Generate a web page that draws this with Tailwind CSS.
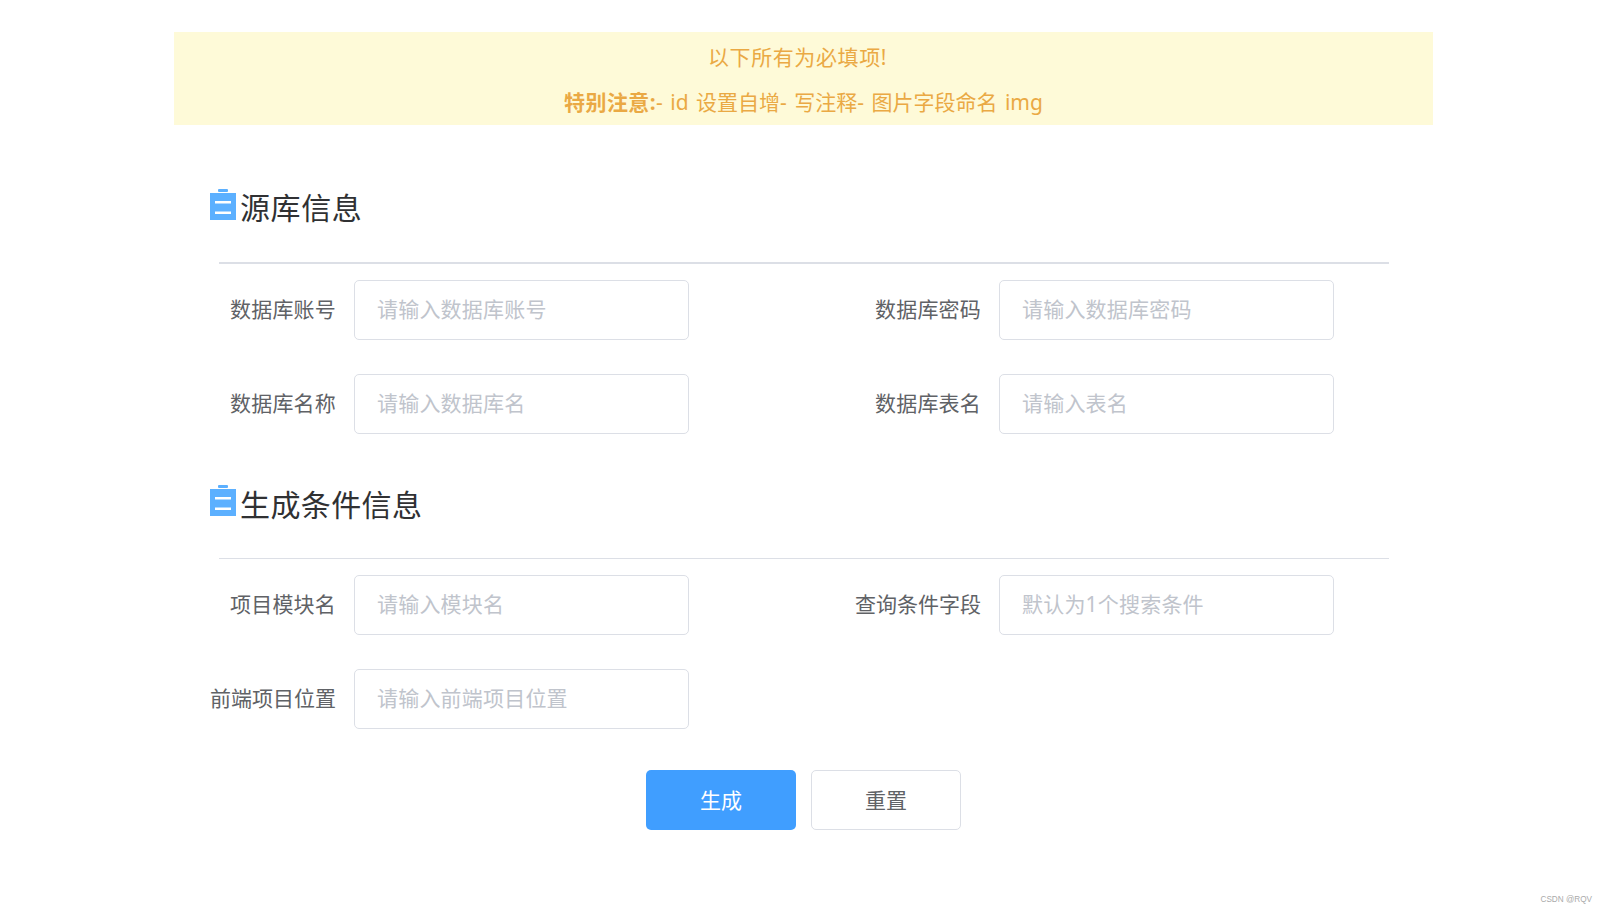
<!DOCTYPE html>
<html lang="zh-CN">

<head>
    <meta charset="UTF-8">
    <meta name="viewport" content="width=device-width, initial-scale=1.0">
    <script src="https://cdn.jsdelivr.net/npm/@tailwindcss/browser@4"></script>
    <title>代码生成</title>
</head>

<body>
    <div class="relative h-[914px] overflow-hidden bg-white pt-[32px] font-['Noto_Sans','Noto_Sans_CJK_SC',sans-serif]">
        <div class="ml-[174px] flex h-[93px] w-[1259px] flex-col items-center bg-[#fefad8] pt-[9px] text-[21px] leading-[32px] text-[#eaa944]">
            <p class="-ml-[12px] tracking-[0.6px]">以下所有为必填项!</p>
            <p class="mt-[13px] [word-spacing:2px]"><b class="font-bold tracking-[0.4px]">特别注意:</b>- id 设置自增- 写注释- 图片字段命名 img</p>
        </div>

        <form class="ml-[210px]">
            <div class="mt-[64px] flex h-[73px] items-start gap-[4px]">
                <svg class="h-[31px] w-[26px]" viewBox="0 0 26 31">
                    <rect fill="#5cb0ff" x="0" y="4" width="26" height="27" />
                    <rect fill="#5cb0ff" x="8" y="0" width="10" height="3" rx="1" />
                    <rect fill="#fff" x="5" y="12" width="16" height="2.5" />
                    <rect fill="#fff" x="5" y="22.5" width="16" height="2.5" />
                </svg>
                <h2 class="text-[30px] leading-[38px] tracking-[0.6px] text-[#303133]">源库信息</h2>
            </div>
            <div class="ml-[9px] h-[2px] w-[1170px] bg-[#dcdfe6]"></div>
            <div class="mt-[16px] grid grid-cols-[645px_645px] gap-y-[34px]">
                <label class="flex items-center"><span class="w-[126px] text-right text-[21px] tracking-[0.2px] text-[#606266]">数据库账号</span><input class="ml-[18px] h-[60px] w-[335px] rounded-[5px] border border-[#dcdfe6] px-[22px] pb-[2px] text-[21px] tracking-[0.2px] outline-none placeholder:text-[#c0c4cc]" placeholder="请输入数据库账号"></label>
                <label class="flex items-center"><span class="w-[126px] text-right text-[21px] tracking-[0.2px] text-[#606266]">数据库密码</span><input class="ml-[18px] h-[60px] w-[335px] rounded-[5px] border border-[#dcdfe6] px-[22px] pb-[2px] text-[21px] tracking-[0.2px] outline-none placeholder:text-[#c0c4cc]" placeholder="请输入数据库密码"></label>
                <label class="flex items-center"><span class="w-[126px] text-right text-[21px] tracking-[0.2px] text-[#606266]">数据库名称</span><input class="ml-[18px] h-[60px] w-[335px] rounded-[5px] border border-[#dcdfe6] px-[22px] pb-[2px] text-[21px] tracking-[0.2px] outline-none placeholder:text-[#c0c4cc]" placeholder="请输入数据库名"></label>
                <label class="flex items-center"><span class="w-[126px] text-right text-[21px] tracking-[0.2px] text-[#606266]">数据库表名</span><input class="ml-[18px] h-[60px] w-[335px] rounded-[5px] border border-[#dcdfe6] px-[22px] pb-[2px] text-[21px] tracking-[0.2px] outline-none placeholder:text-[#c0c4cc]" placeholder="请输入表名"></label>
            </div>

            <div class="mt-[51px] flex h-[73px] items-start gap-[4px]">
                <svg class="h-[31px] w-[26px]" viewBox="0 0 26 31">
                    <rect fill="#5cb0ff" x="0" y="4" width="26" height="27" />
                    <rect fill="#5cb0ff" x="8" y="0" width="10" height="3" rx="1" />
                    <rect fill="#fff" x="5" y="12" width="16" height="2.5" />
                    <rect fill="#fff" x="5" y="22.5" width="16" height="2.5" />
                </svg>
                <h2 class="mt-[1px] text-[30px] leading-[38px] tracking-[0.4px] text-[#303133]">生成条件信息</h2>
            </div>
            <div class="ml-[9px] h-[1px] w-[1170px] bg-[#dcdfe6]"></div>
            <div class="mt-[16px] grid grid-cols-[645px_645px] gap-y-[34px]">
                <label class="flex items-center"><span class="w-[126px] text-right text-[21px] tracking-[0.2px] text-[#606266]">项目模块名</span><input class="ml-[18px] h-[60px] w-[335px] rounded-[5px] border border-[#dcdfe6] px-[22px] pb-[2px] text-[21px] tracking-[0.2px] outline-none placeholder:text-[#c0c4cc]" placeholder="请输入模块名"></label>
                <label class="flex items-center"><span class="w-[126px] whitespace-nowrap text-right text-[21px] text-[#606266]">查询条件字段</span><input class="ml-[18px] h-[60px] w-[335px] rounded-[5px] border border-[#dcdfe6] px-[22px] pb-[2px] text-[21px] tracking-[0.2px] outline-none placeholder:text-[#c0c4cc]" placeholder="默认为1个搜索条件"></label>
                <label class="flex items-center"><span class="w-[126px] whitespace-nowrap text-right text-[21px] text-[#606266]">前端项目位置</span><input class="ml-[18px] h-[60px] w-[335px] rounded-[5px] border border-[#dcdfe6] px-[22px] pb-[2px] text-[21px] tracking-[0.2px] outline-none placeholder:text-[#c0c4cc]" placeholder="请输入前端项目位置"></label>
            </div>

            <div class="mt-[41px] ml-[436px] flex gap-[15px]">
                <button type="button" class="h-[60px] w-[150px] rounded-[5px] bg-[#409eff] pt-[1px] text-[21px] text-white">生成</button>
                <button type="button" class="h-[60px] w-[150px] rounded-[5px] border border-[#dcdfe6] bg-white pt-[1px] text-[21px] text-[#606266]">重置</button>
            </div>
        </form>

        <span class="absolute right-[14px] bottom-[8px] font-['Liberation_Sans',sans-serif] text-[8.2px] leading-[12px] text-[#aaaaaa]">CSDN @RQV</span>
    </div>
</body>

</html>
